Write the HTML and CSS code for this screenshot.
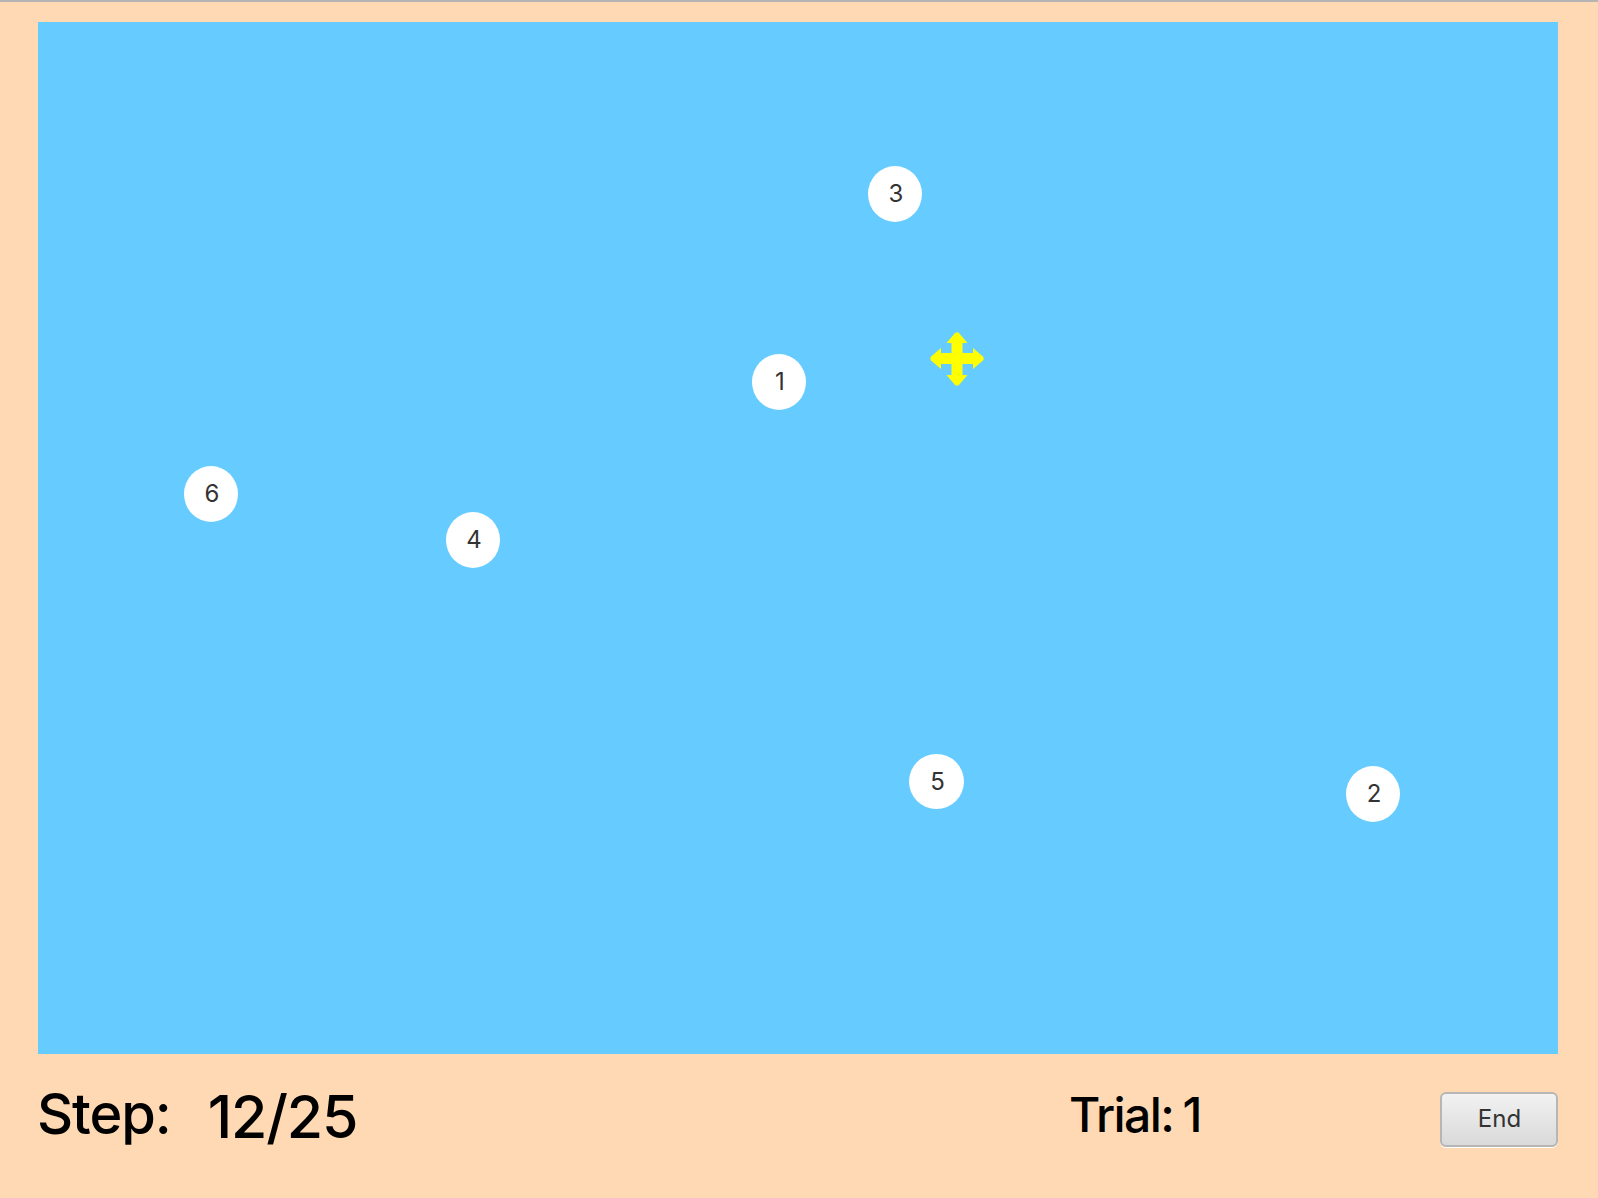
FILE: index.html
```html
<!DOCTYPE html>
<html lang="en">
<head>
<meta charset="utf-8">
<title>Trial</title>
<link rel="stylesheet" href="styles.css">
</head>
<body>
<main class="app">
  <section class="stage">
    <div class="node n1">1</div>
    <div class="node n2">2</div>
    <div class="node n3">3</div>
    <div class="node n4">4</div>
    <div class="node n5">5</div>
    <div class="node n6">6</div>
    <svg class="cursor" width="54" height="54" viewBox="0 0 54 54" aria-hidden="true">
      <polygon points="25.5,0.5 28.5,0.5 37.5,11 32.5,11 32.5,21 43,21 43,16 53.5,25 53.5,28 43,37 43,32 32.5,32 32.5,43 37.5,43 28.5,53.5 25.5,53.5 16.5,43 21.5,43 21.5,32 11,32 11,37 0.5,28 0.5,25 11,16 11,21 21.5,21 21.5,11 16.5,11" fill="#ffff00"/>
    </svg>
  </section>
  <footer class="bar">
    <div class="step"><span class="step-label">Step:</span><span class="step-value">12/25</span></div>
    <div class="trial">Trial: 1</div>
    <button class="end" type="button">End</button>
  </footer>
</main>
</body>
</html>
```
FILE: styles.css
```css
* { box-sizing: border-box; }
html, body { margin: 0; height: 100%; }
body {
  background: #ffd9b3;
  border-top: 2px solid #b4b4b4;
  font-family: Inter, "Noto Sans", sans-serif;
  color: #000;
  overflow: hidden;
}
.app { padding: 20px 40px 0 38px; }
.stage {
  position: relative;
  height: 1032px;
  background: #66ccff;
}
.node {
  position: absolute;
  width: 54px;
  height: 56px;
  padding: 0 0 2px 2px;
  border-radius: 50%;
  background: #fff;
  color: #333;
  font-size: 24px;
  display: flex;
  align-items: center;
  justify-content: center;
}
.n1 { left: 714px; top: 332px; }
.n2 { left: 1308px; top: 744px; }
.n3 { left: 830px; top: 144px; }
.n4 { left: 408px; top: 490px; }
.n5 { left: 871px; top: 732px; width: 55px; height: 55px; padding-bottom: 0; }
.n6 { left: 146px; top: 444px; }
.cursor { position: absolute; left: 892px; top: 310px; display: block; }
.bar {
  display: flex;
  align-items: flex-start;
  height: 92px;
}
.step {
  display: flex;
  gap: 37px;
  width: 1032px;
  padding-top: 24px;
  line-height: 72px;
}
.step-label { font-size: 56px; letter-spacing: -1.1px; margin-left: -1px; font-weight: 450; }
.step-value { font-size: 59px; letter-spacing: -1.2px; padding-top: 3px; font-weight: 450; }
.trial {
  width: 371px;
  margin-left: -1px;
  padding-top: 25px;
  font-size: 48px;
  font-weight: 450;
  line-height: 72px;
  letter-spacing: -1.6px;
  word-spacing: -2px;
}
.end {
  width: 118px;
  height: 55px;
  margin-top: 38px;
  padding: 0 0 2px 1px;
  border: 2px solid #b6b6b6;
  border-radius: 6px;
  background: linear-gradient(#f2f2f2, #d9d9d9);
  box-shadow: 0 1px 0 #fff;
  color: #333;
  font-family: inherit;
  font-size: 24px;
}
```
